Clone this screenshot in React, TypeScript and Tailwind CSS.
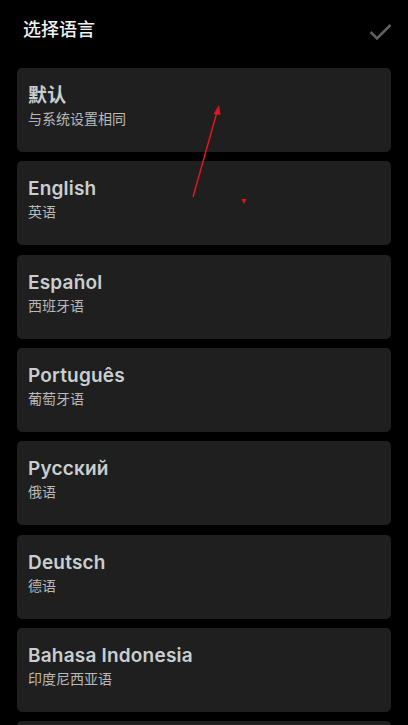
import React from 'react';

const languages = [
  { name: '默认', sub: '与系统设置相同' },
  { name: 'English', sub: '英语' },
  { name: 'Español', sub: '西班牙语' },
  { name: 'Português', sub: '葡萄牙语' },
  { name: 'Русский', sub: '俄语' },
  { name: 'Deutsch', sub: '德语' },
  { name: 'Bahasa Indonesia', sub: '印度尼西亚语' },
];

export default function App() {
  return (
    <div
      className="relative h-[725px] w-[408px] overflow-hidden bg-black"
      style={{ fontFamily: 'Inter, "Noto Sans CJK SC", sans-serif' }}
    >
      {/* Header */}
      <div className="flex h-[68px] items-start justify-between pl-[23px] pr-[16px] pt-[17px]">
        <h1 className="text-[18px] leading-[26px] font-medium text-[#f2f2f2]">选择语言</h1>
        <svg width="24" height="24" viewBox="0 0 24 24" className="mt-[2px]">
          <path d="M2.5 13 L9 19.5 L22.5 6" fill="none" stroke="#5f5f5f" strokeWidth="2.6" />
        </svg>
      </div>

      {/* List */}
      <div className="flex flex-col gap-[9.33px] px-[17px]">
        {languages.map((lang) => (
          <div key={lang.name} className="h-[84px] rounded-[5px] bg-[#1f1f1f] pl-[11px] pt-[15px]">
            <div className="text-[19px] leading-[26px] font-semibold tracking-[0.2px] text-[#c9ced1]">{lang.name}</div>
            <div className="mt-[1px] text-[14px] leading-[18px] text-[#b9b9b9]">{lang.sub}</div>
          </div>
        ))}
        {/* next item, cut off by the screen edge */}
        <div className="h-[84px] rounded-[5px] bg-[#1f1f1f]" />
      </div>

      {/* Red annotation arrow */}
      <svg className="pointer-events-none absolute left-0 top-0" width="408" height="725">
        <line x1="193" y1="197" x2="217" y2="112" stroke="#e0161e" strokeWidth="1.5" />
        <polygon points="219,105 213.5,114 220.5,115" fill="#e0161e" />
        <polygon points="241.5,199 246.5,199 244,204" fill="#e0161e" />
      </svg>
    </div>
  );
}
